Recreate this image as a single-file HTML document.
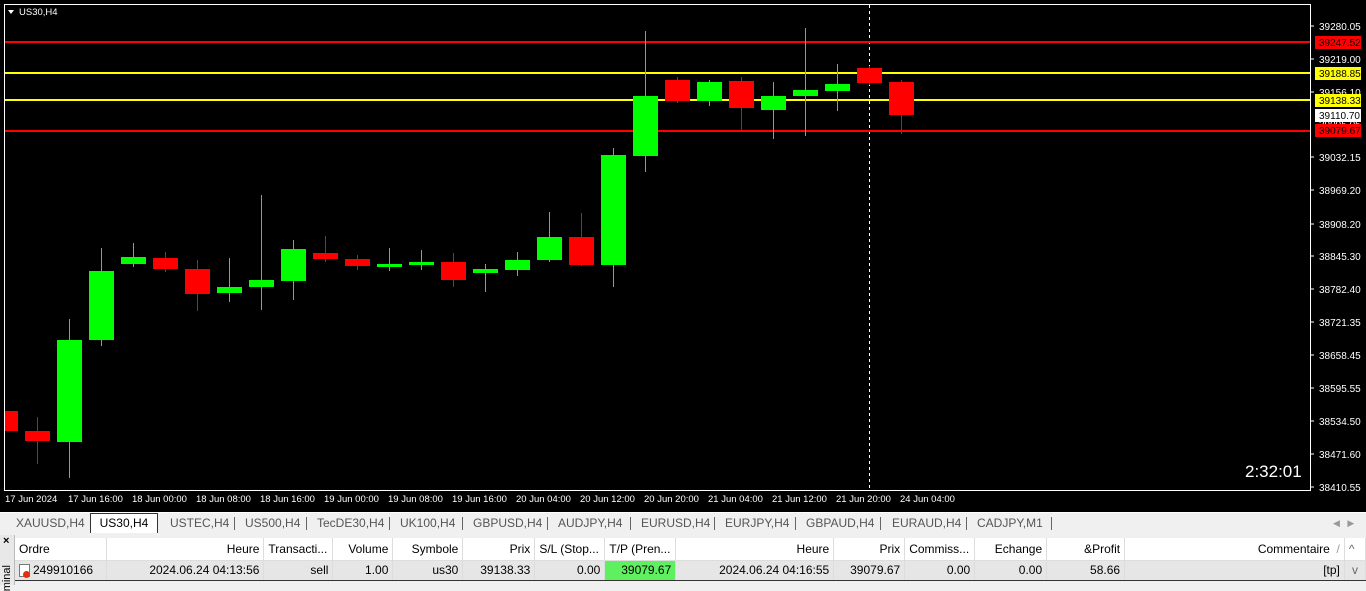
<!DOCTYPE html>
<html><head><meta charset="utf-8"><style>
*{margin:0;padding:0;box-sizing:border-box}
body{width:1366px;height:585px;overflow:hidden;background:#f0f0f0;font-family:"Liberation Sans",sans-serif;position:relative}
#chart{position:absolute;left:0;top:0}
.tabs{position:absolute;top:512px;left:0;width:1366px;height:21px;background:#f0f0f0;border-top:1px solid #fff;font-size:12px;color:#555}
.tab{position:absolute;top:3px}
.tabsel{position:absolute;top:0;left:90px;width:68px;height:20px;background:#fff;border:1px solid #333;border-bottom:none;color:#000;font-size:12px;text-align:center;padding-top:2px}
.sep{position:absolute;top:4px;width:1px;height:13px;background:#666}
table{position:absolute;left:15px;top:538px;border-collapse:collapse;font-size:12px;table-layout:fixed}
td{height:22px;border-right:1px solid #ddd;padding:0 4px;white-space:nowrap;overflow:hidden}
tr.h td{background:#fff;border-bottom:1px solid #ddd}
tr.r td{background:#e6e6e6;text-align:right;height:20px;border-bottom:1px solid #333}
.side{position:absolute;left:0;top:535px;width:15px;height:50px;background:#e8e8e8;border-right:1px solid #bbb}
</style></head><body>
<svg id="chart" width="1366" height="512" xmlns="http://www.w3.org/2000/svg" font-family="Liberation Sans, sans-serif" font-size="10">
<rect width="1366" height="512" fill="#000"/>
<rect x="4.5" y="4.5" width="1306" height="486" fill="none" stroke="#fff"/>
<polygon points="8,10 14,10 11,14" fill="#fff"/>
<text x="19" y="15" fill="#fff" font-size="9.5">US30,H4</text>
<line x1="869.5" y1="5" x2="869.5" y2="490" stroke="#fff" stroke-dasharray="3,3"/>
<line x1="5" y1="42" x2="1310" y2="42" stroke="#f00" stroke-width="2"/>
<line x1="5" y1="73" x2="1310" y2="73" stroke="#ff0" stroke-width="2"/>
<line x1="5" y1="100" x2="1310" y2="100" stroke="#ff0" stroke-width="2"/>
<line x1="5" y1="131" x2="1310" y2="131" stroke="#f00" stroke-width="2"/>
<g stroke-width="1">
<line x1="37.5" y1="417" x2="37.5" y2="464" stroke="#f00"/>
<line x1="69.5" y1="319" x2="69.5" y2="478" stroke="#0f0"/>
<line x1="101.5" y1="248" x2="101.5" y2="346" stroke="#0f0"/>
<line x1="133.5" y1="243" x2="133.5" y2="267" stroke="#0f0"/>
<line x1="165.5" y1="252" x2="165.5" y2="272" stroke="#f00"/>
<line x1="197.5" y1="260" x2="197.5" y2="311" stroke="#f00"/>
<line x1="229.5" y1="258" x2="229.5" y2="302" stroke="#0f0"/>
<line x1="261.5" y1="195" x2="261.5" y2="310" stroke="#0f0"/>
<line x1="293.5" y1="240" x2="293.5" y2="300" stroke="#0f0"/>
<line x1="325.5" y1="236" x2="325.5" y2="262" stroke="#f00"/>
<line x1="357.5" y1="255" x2="357.5" y2="270" stroke="#f00"/>
<line x1="389.5" y1="248" x2="389.5" y2="271" stroke="#0f0"/>
<line x1="421.5" y1="250" x2="421.5" y2="270" stroke="#0f0"/>
<line x1="453.5" y1="253" x2="453.5" y2="287" stroke="#f00"/>
<line x1="485.5" y1="264" x2="485.5" y2="292" stroke="#0f0"/>
<line x1="517.5" y1="252" x2="517.5" y2="276" stroke="#0f0"/>
<line x1="549.5" y1="212" x2="549.5" y2="262" stroke="#0f0"/>
<line x1="581.5" y1="213" x2="581.5" y2="266" stroke="#f00"/>
<line x1="613.5" y1="148" x2="613.5" y2="287" stroke="#0f0"/>
<line x1="645.5" y1="31" x2="645.5" y2="172" stroke="#0f0"/>
<line x1="677.5" y1="77" x2="677.5" y2="103" stroke="#f00"/>
<line x1="709.5" y1="80" x2="709.5" y2="106" stroke="#0f0"/>
<line x1="741.5" y1="77" x2="741.5" y2="132" stroke="#f00"/>
<line x1="773.5" y1="82" x2="773.5" y2="139" stroke="#0f0"/>
<line x1="805.5" y1="28" x2="805.5" y2="136" stroke="#0f0"/>
<line x1="837.5" y1="64" x2="837.5" y2="111" stroke="#0f0"/>
<line x1="869.5" y1="66" x2="869.5" y2="85" stroke="#f00"/>
<line x1="901.5" y1="80" x2="901.5" y2="134" stroke="#f00"/>
</g>
<g>
<rect x="5" y="411" width="13" height="20" fill="#f00"/>
<rect x="25" y="431" width="25" height="10" fill="#f00"/>
<rect x="57" y="340" width="25" height="102" fill="#0f0"/>
<rect x="89" y="271" width="25" height="69" fill="#0f0"/>
<rect x="121" y="257" width="25" height="7" fill="#0f0"/>
<rect x="153" y="258" width="25" height="11" fill="#f00"/>
<rect x="185" y="269" width="25" height="25" fill="#f00"/>
<rect x="217" y="287" width="25" height="6" fill="#0f0"/>
<rect x="249" y="280" width="25" height="7" fill="#0f0"/>
<rect x="281" y="249" width="25" height="32" fill="#0f0"/>
<rect x="313" y="253" width="25" height="6" fill="#f00"/>
<rect x="345" y="259" width="25" height="7" fill="#f00"/>
<rect x="377" y="264" width="25" height="3" fill="#0f0"/>
<rect x="409" y="262" width="25" height="3" fill="#0f0"/>
<rect x="441" y="262" width="25" height="18" fill="#f00"/>
<rect x="473" y="269" width="25" height="4" fill="#0f0"/>
<rect x="505" y="260" width="25" height="10" fill="#0f0"/>
<rect x="537" y="237" width="25" height="23" fill="#0f0"/>
<rect x="569" y="237" width="25" height="28" fill="#f00"/>
<rect x="601" y="155" width="25" height="110" fill="#0f0"/>
<rect x="633" y="96" width="25" height="60" fill="#0f0"/>
<rect x="665" y="80" width="25" height="21" fill="#f00"/>
<rect x="697" y="82" width="25" height="19" fill="#0f0"/>
<rect x="729" y="81" width="25" height="27" fill="#f00"/>
<rect x="761" y="96" width="25" height="14" fill="#0f0"/>
<rect x="793" y="90" width="25" height="6" fill="#0f0"/>
<rect x="825" y="84" width="25" height="7" fill="#0f0"/>
<rect x="857" y="68" width="25" height="15" fill="#f00"/>
<rect x="889" y="82" width="25" height="33" fill="#f00"/>
</g>
<g fill="#fff" stroke="#fff">
<line x1="1310" y1="26" x2="1314" y2="26"/><text x="1319" y="30" stroke="none">39280.05</text>
<line x1="1310" y1="59" x2="1314" y2="59"/><text x="1319" y="63" stroke="none">39219.00</text>
<line x1="1310" y1="92" x2="1314" y2="92"/><text x="1319" y="96" stroke="none">39156.10</text>
<text x="1319" y="128" stroke="none">39095.05</text>
<line x1="1310" y1="157" x2="1314" y2="157"/><text x="1319" y="161" stroke="none">39032.15</text>
<line x1="1310" y1="190" x2="1314" y2="190"/><text x="1319" y="194" stroke="none">38969.20</text>
<line x1="1310" y1="224" x2="1314" y2="224"/><text x="1319" y="228" stroke="none">38908.20</text>
<line x1="1310" y1="256" x2="1314" y2="256"/><text x="1319" y="260" stroke="none">38845.30</text>
<line x1="1310" y1="289" x2="1314" y2="289"/><text x="1319" y="293" stroke="none">38782.40</text>
<line x1="1310" y1="322" x2="1314" y2="322"/><text x="1319" y="326" stroke="none">38721.35</text>
<line x1="1310" y1="355" x2="1314" y2="355"/><text x="1319" y="359" stroke="none">38658.45</text>
<line x1="1310" y1="388" x2="1314" y2="388"/><text x="1319" y="392" stroke="none">38595.55</text>
<line x1="1310" y1="421" x2="1314" y2="421"/><text x="1319" y="425" stroke="none">38534.50</text>
<line x1="1310" y1="454" x2="1314" y2="454"/><text x="1319" y="458" stroke="none">38471.60</text>
<line x1="1310" y1="487" x2="1314" y2="487"/><text x="1319" y="491" stroke="none">38410.55</text>
</g>
<rect x="1315" y="36" width="46" height="13" fill="#f00"/><text x="1319" y="46" fill="#000">39247.52</text>
<rect x="1315" y="67" width="46" height="13" fill="#ff0"/><text x="1319" y="77" fill="#000">39188.85</text>
<rect x="1315" y="94" width="46" height="13" fill="#ff0"/><text x="1319" y="104" fill="#000">39138.33</text>
<rect x="1315" y="109" width="46" height="13" fill="#fff"/><text x="1319" y="119" fill="#000">39110.70</text>
<rect x="1315" y="124" width="46" height="13" fill="#f00"/><text x="1319" y="134" fill="#000">39079.67</text>
<text x="1245" y="477" fill="#fff" font-size="17">2:32:01</text>
<g fill="#fff" stroke="#fff" font-size="9.5">
<text x="5" y="502" stroke="none">17 Jun 2024</text>
<text x="68" y="502" stroke="none">17 Jun 16:00</text>
<text x="132" y="502" stroke="none">18 Jun 00:00</text>
<text x="196" y="502" stroke="none">18 Jun 08:00</text>
<text x="260" y="502" stroke="none">18 Jun 16:00</text>
<text x="324" y="502" stroke="none">19 Jun 00:00</text>
<text x="388" y="502" stroke="none">19 Jun 08:00</text>
<text x="452" y="502" stroke="none">19 Jun 16:00</text>
<text x="516" y="502" stroke="none">20 Jun 04:00</text>
<text x="580" y="502" stroke="none">20 Jun 12:00</text>
<text x="644" y="502" stroke="none">20 Jun 20:00</text>
<text x="708" y="502" stroke="none">21 Jun 04:00</text>
<text x="772" y="502" stroke="none">21 Jun 12:00</text>
<text x="836" y="502" stroke="none">21 Jun 20:00</text>
<text x="900" y="502" stroke="none">24 Jun 04:00</text>
</g>
</svg>
<div class="tabs">
<span class="tab" style="left:16px">XAUUSD,H4</span>
<div class="tabsel">US30,H4</div>
<span class="tab" style="left:170px">USTEC,H4</span><div class="sep" style="left:234px"></div>
<span class="tab" style="left:245px">US500,H4</span><div class="sep" style="left:306px"></div>
<span class="tab" style="left:317px">TecDE30,H4</span><div class="sep" style="left:389px"></div>
<span class="tab" style="left:400px">UK100,H4</span><div class="sep" style="left:462px"></div>
<span class="tab" style="left:473px">GBPUSD,H4</span><div class="sep" style="left:547px"></div>
<span class="tab" style="left:558px">AUDJPY,H4</span><div class="sep" style="left:630px"></div>
<span class="tab" style="left:641px">EURUSD,H4</span><div class="sep" style="left:714px"></div>
<span class="tab" style="left:725px">EURJPY,H4</span><div class="sep" style="left:795px"></div>
<span class="tab" style="left:806px">GBPAUD,H4</span><div class="sep" style="left:880px"></div>
<span class="tab" style="left:892px">EURAUD,H4</span><div class="sep" style="left:966px"></div>
<span class="tab" style="left:977px">CADJPY,M1</span><div class="sep" style="left:1051px"></div>
<span class="tab" style="left:1333px;color:#999;font-size:9px;top:5px">◀ &nbsp; ▶</span>
</div>
<div class="side"><span style="position:absolute;left:3px;top:0;font-size:11px;font-weight:bold">×</span><span style="position:absolute;left:1px;top:30px;font-size:11px;writing-mode:vertical-rl;transform:rotate(180deg)">minal</span></div>
<table>
<colgroup><col style="width:92px"><col style="width:157px"><col style="width:69px"><col style="width:60px"><col style="width:70px"><col style="width:72px"><col style="width:70px"><col style="width:71px"><col style="width:158px"><col style="width:71px"><col style="width:70px"><col style="width:72px"><col style="width:78px"><col style="width:220px"><col style="width:21px"></colgroup>
<tr class="h"><td>Ordre</td><td style="text-align:right">Heure</td><td>Transacti...</td><td style="text-align:right">Volume</td><td style="text-align:right">Symbole</td><td style="text-align:right">Prix</td><td>S/L (Stop...</td><td>T/P (Pren...</td><td style="text-align:right">Heure</td><td style="text-align:right">Prix</td><td>Commiss...</td><td style="text-align:right">Echange</td><td style="text-align:right">&amp;Profit</td><td style="text-align:right">Commentaire &nbsp;<span style="color:#999">/</span></td><td style="color:#666">^</td></tr>
<tr class="r"><td style="text-align:left"><span style="display:inline-block;width:11px;height:13px;border:1px solid #777;background:#fff;vertical-align:middle;position:relative;margin-right:3px"><span style="position:absolute;left:3px;top:6px;width:7px;height:7px;border-radius:50%;background:#e03010"></span></span>249910166</td><td>2024.06.24 04:13:56</td><td>sell</td><td>1.00</td><td>us30</td><td>39138.33</td><td>0.00</td><td style="background:#5ff05f">39079.67</td><td>2024.06.24 04:16:55</td><td>39079.67</td><td>0.00</td><td>0.00</td><td>58.66</td><td>[tp]</td><td style="color:#666;text-align:center">v</td></tr>
</table>
</body></html>
